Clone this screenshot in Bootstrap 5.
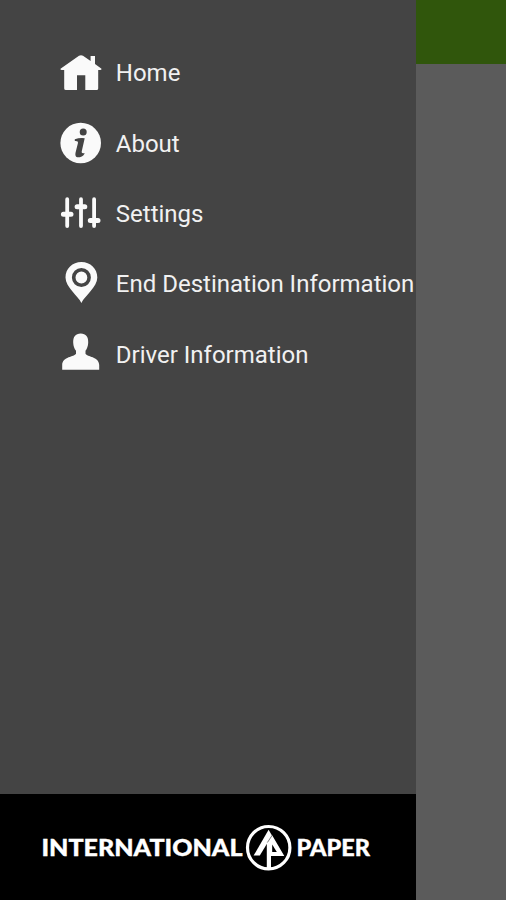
<!DOCTYPE html>
<html lang="en">
<head>
<meta charset="utf-8">
<meta name="viewport" content="width=device-width, initial-scale=1">
<title>International Paper</title>
<link href="https://cdn.jsdelivr.net/npm/bootstrap@5.3.0/dist/css/bootstrap.min.css" rel="stylesheet">
<style>
body { background: #5b5b5b; font-family: Roboto, sans-serif; }
.drawer { width: 416px; background: #444; }
.menu { padding: 38.2px 0 0 59px; }
.menu .nav-link { height: 70.3px; padding: 0; gap: 12.8px; color: #f1f1f1; font-size: 24px; line-height: 28px; white-space: nowrap; }
.menu .nav-link:hover { color: #fff; }
.menu svg { width: 44px; height: 44px; fill: #fafafa; flex: none; }
.brand-bar { height: 106px; background: #000; }
.brand-bar text { font-family: Lato, sans-serif; font-weight: 900; font-size: 22px; fill: #fff; stroke: #fff; stroke-width: .35px; }
.top-strip { height: 64px; background: #30560c; }
</style>
</head>
<body>
<div class="d-flex vh-100 overflow-hidden">
  <aside class="drawer d-flex flex-column flex-shrink-0">
    <nav class="menu nav flex-column flex-nowrap flex-grow-1">
      <a class="nav-link d-flex align-items-center" href="#">
        <svg viewBox="0 0 44 44"><path d="M1.5 17.8 20 4.8Q22 3.6 24 4.8L31.6 10V5H36V13L42.5 17.8Q42.8 19 41 19H39.2V37.5Q39.2 39 37.5 39H26.3V24.3H18V39H7Q5.2 39 5.2 37.5V19H3Q1 19 1.5 17.8Z"/></svg>
        <span>Home</span></a>
      <a class="nav-link d-flex align-items-center" href="#">
        <svg viewBox="0 0 44 44"><circle cx="21.7" cy="21" r="20.3"/><circle cx="24.2" cy="10" r="3.5" fill="#444"/><path fill="#444" d="M15.8 17.2Q20.2 15.7 25.7 16.2L22.7 29.5Q22.2 32 25.6 31Q25.3 33.8 20.8 35.2C16.4 36 15.9 33.2 16.7 30L18.9 21.3Q19.5 18.6 15.8 19Z"/></svg>
        <span>About</span></a>
      <a class="nav-link d-flex align-items-center" href="#">
        <svg viewBox="0 0 44 44"><g fill="none" stroke="#fafafa" stroke-linecap="round"><path stroke-width="3.8" d="M8.2 7.2V34M22 7.2V34M35.1 7.2V34"/><path stroke-width="5" d="M4.4 22.2H12M18.1 14.8H25.8M31.3 28.4H39"/></g></svg>
        <span>Settings</span></a>
      <a class="nav-link d-flex align-items-center" href="#">
        <svg viewBox="0 0 44 44"><path d="M22.4 41C18.8 33.6 6.5 25.2 6.5 15.6C6.5 6.6 13.4 0 22.4 0S38.3 6.6 38.3 15.6C38.3 25.2 26 33.6 22.4 41Z"/><circle cx="22.4" cy="15.5" r="7.7" fill="none" stroke="#444" stroke-width="3.6"/></svg>
        <span>End Destination Information</span></a>
      <a class="nav-link d-flex align-items-center" href="#">
        <svg viewBox="0 0 44 44"><path d="M21.7.5C27 .5 29.5 4 29.2 9.7C29 13.2 28 15.7 26.5 17.7V20.8C28 24 40 23.5 40.2 32V36.7H3.2V32C3.4 23.5 15.4 24 17 20.8V17.7C15.4 15.7 14.4 13.2 14.2 9.7C14 4 16.4.5 21.7.5Z"/></svg>
        <span>Driver Information</span></a>
    </nav>
    <footer class="brand-bar flex-shrink-0">
      <svg class="d-block" width="416" height="106" viewBox="0 0 416 106">
        <text x="41.5" y="61.5" textLength="201" lengthAdjust="spacingAndGlyphs">INTERNATIONAL</text>
        <text x="296.5" y="61.5" textLength="73.5" lengthAdjust="spacingAndGlyphs">PAPER</text>
        <circle cx="268.7" cy="53.7" r="21.2" fill="none" stroke="#fff" stroke-width="3.2"/>
        <path fill="#fff" d="M268.6 35.8L272 41.5L259.8 61.6H253.6Z"/>
        <path fill="#fff" d="M266.8 48L272 41L284.3 62H271V74.5H266.8Z"/>
        <path fill="#000" d="M272.2 50.5L276.8 58H272.2Z"/>
        <path fill="none" stroke="#000" stroke-opacity=".65" stroke-width=".8" d="M272.2 41.3L267.4 48.5"/>
      </svg>
    </footer>
  </aside>
  <main class="flex-grow-1"><div class="top-strip"></div></main>
</div>
<script src="https://cdn.jsdelivr.net/npm/bootstrap@5.3.0/dist/js/bootstrap.bundle.min.js"></script>
</body>
</html>
